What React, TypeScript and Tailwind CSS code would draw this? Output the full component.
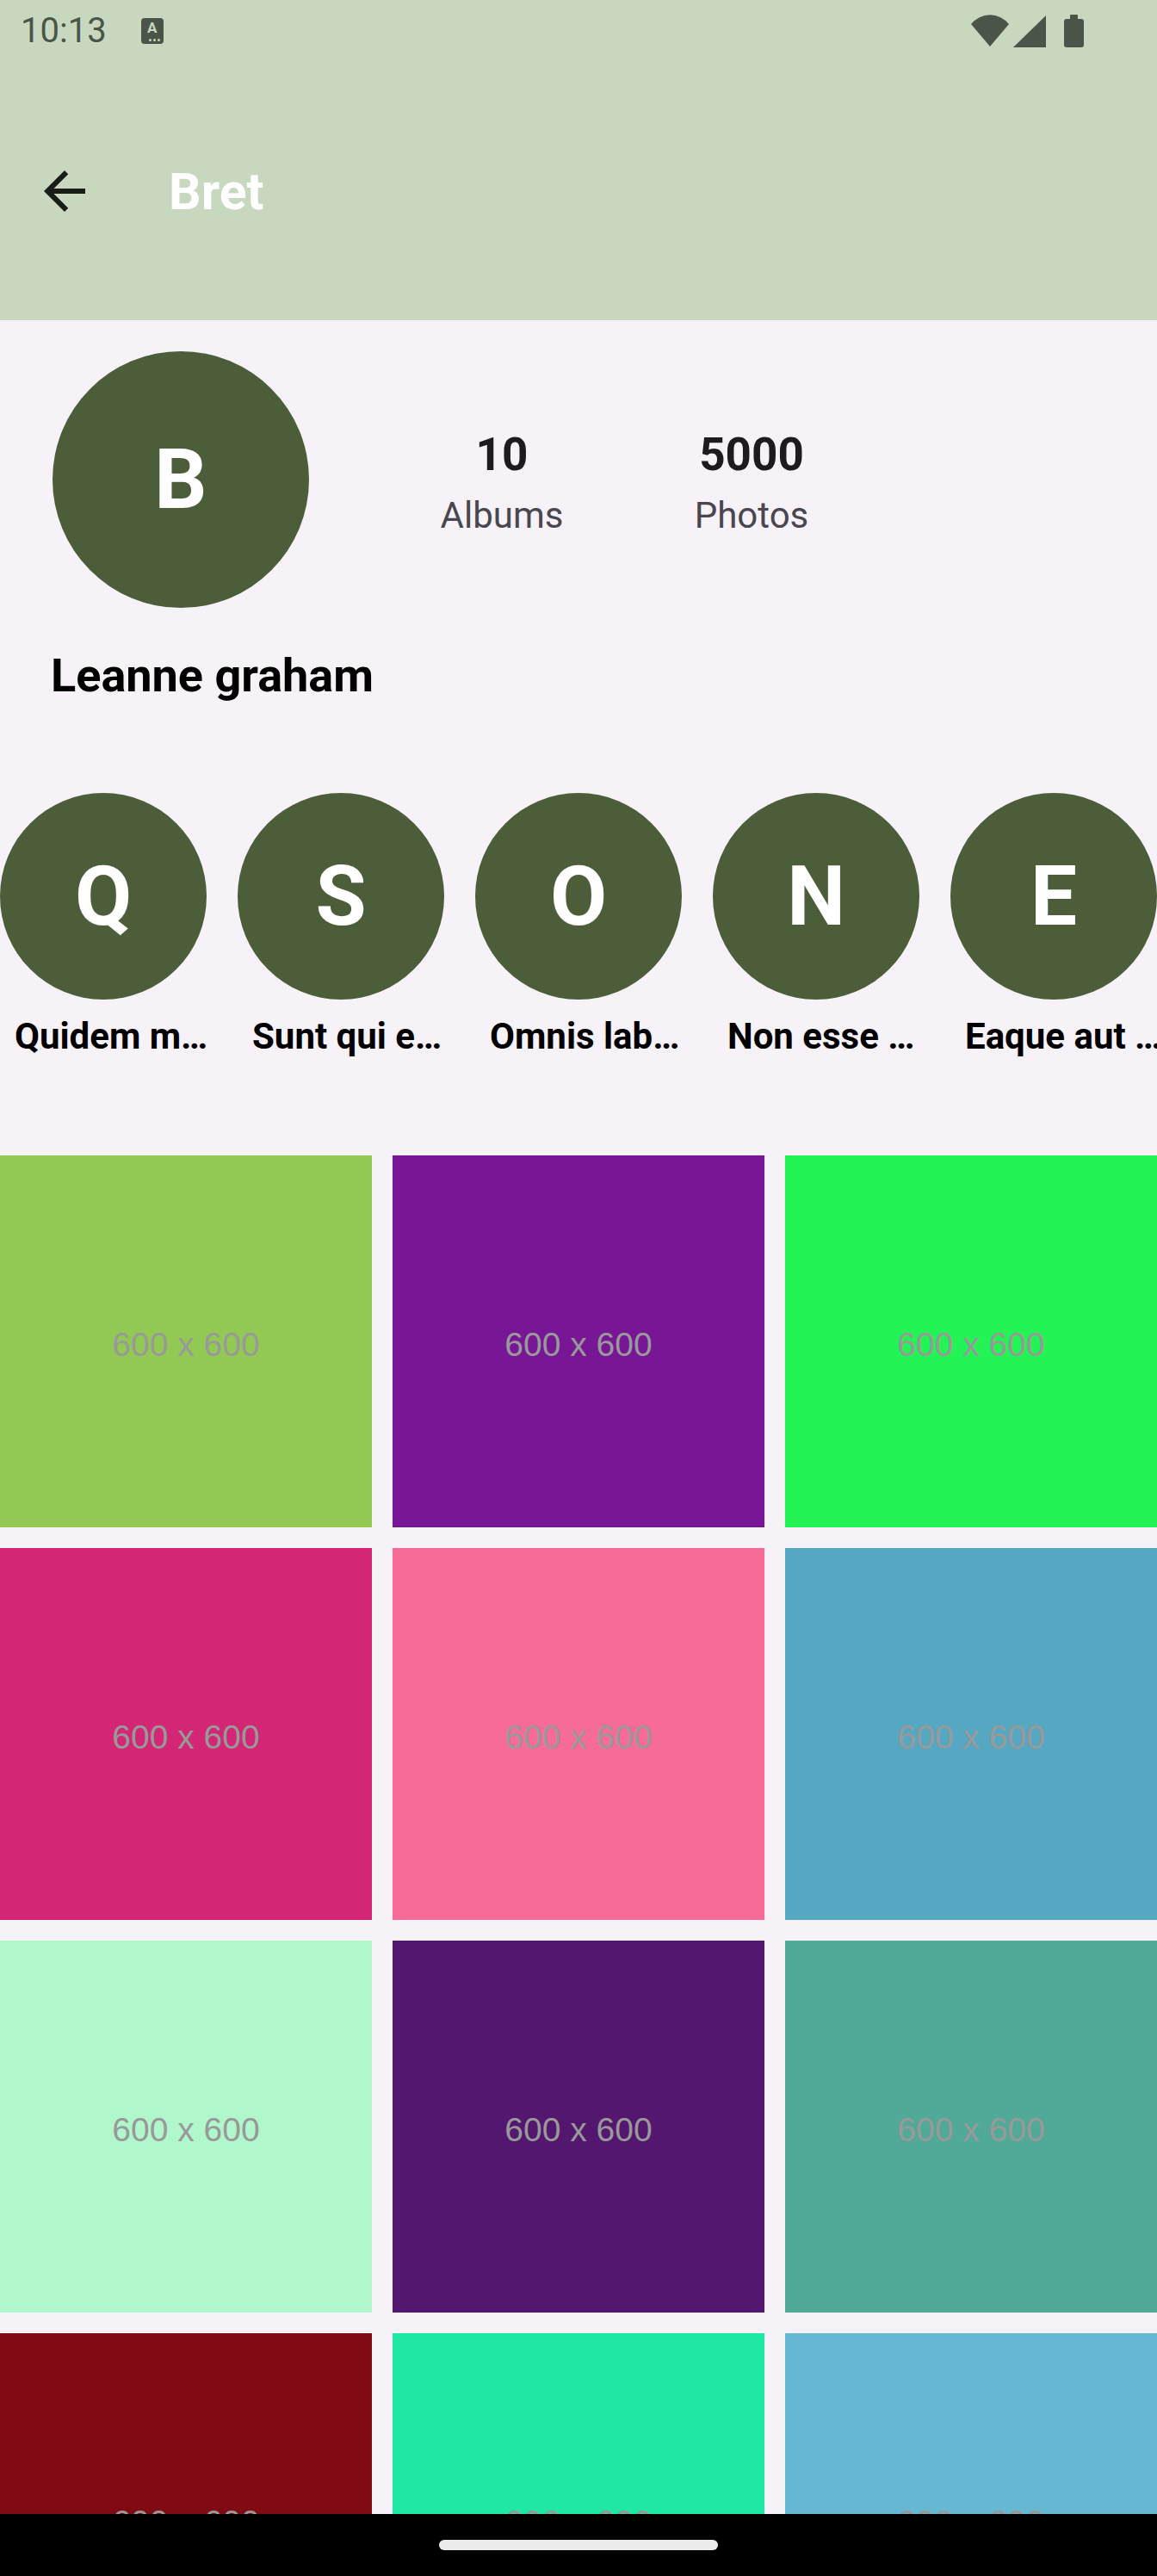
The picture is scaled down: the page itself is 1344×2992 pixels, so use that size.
import React from "react";

type Album = {
  letter: string;
  title: string;
};

const albums: Album[] = [
  { letter: "Q", title: "Quidem m…" },
  { letter: "S", title: "Sunt qui e…" },
  { letter: "O", title: "Omnis lab…" },
  { letter: "N", title: "Non esse …" },
  { letter: "E", title: "Eaque aut …" },
];

// placeholder colours of the first album's photos
const photos: string[] = [
  "#92c952",
  "#771796",
  "#24f355",
  "#d32776",
  "#f66b97",
  "#56a8c2",
  "#b0f7cc",
  "#54176f",
  "#51aa97",
  "#810b14",
  "#1ee8a4",
  "#66b7d2",
];

const StatusBar = () => {
  return (
    <div className="flex h-[72px] items-center">
      <span className="ml-[24px] text-[40px] leading-none text-[#4b5449]">
        10:13
      </span>
      <div className="relative ml-[40px] flex h-[30px] w-[26px] items-start justify-center rounded-[4px] bg-[#4b5449]">
        <span className="mt-[3px] text-[17px] font-bold leading-none text-[#c7d8be]">
          A
        </span>
        <div className="absolute bottom-[3px] right-[4px] flex gap-[2px]">
          <span className="h-[3px] w-[3px] rounded-full bg-[#c7d8be]" />
          <span className="h-[3px] w-[3px] rounded-full bg-[#c7d8be]" />
          <span className="h-[3px] w-[3px] rounded-full bg-[#c7d8be]" />
        </div>
      </div>
      <svg
        className="ml-auto mr-[84px]"
        width="132"
        height="40"
        viewBox="0 0 132 40"
        fill="#4b5449"
      >
        <path d="M22 38 L0 12 A28 28 0 0 1 44 12 Z" />
        <path d="M49 39 L87 2 L87 39 Z" />
        <rect x="108" y="6" width="23" height="33" rx="3" />
        <rect x="115" y="1" width="9" height="6" rx="1" />
      </svg>
    </div>
  );
};

const Stat = ({ value, label }: { value: string; label: string }) => {
  return (
    <div className="flex w-[160px] flex-col items-center">
      <span className="text-[53px] font-bold leading-[62px] text-[#1d1b20]">
        {value}
      </span>
      <span className="mt-[15px] text-[42px] leading-[50px] text-[#4a4650]">
        {label}
      </span>
    </div>
  );
};

const App = () => {
  return (
    <div className="flex h-[2992px] w-[1344px] flex-col overflow-hidden bg-[#f7f2f7] font-['Roboto',sans-serif]">
      <header className="shrink-0 bg-[#c7d8be]">
        <StatusBar />
        <div className="flex h-[300px] items-center">
          <svg
            className="ml-[39px]"
            width="72"
            height="72"
            viewBox="0 0 24 24"
            fill="#1a1c18"
          >
            <path d="M20 11H7.83l5.59-5.59L12 4l-8 8 8 8 1.41-1.41L7.83 13H20v-2z" />
          </svg>
          <h1 className="ml-[85px] text-[59px] font-bold leading-none text-white">
            Bret
          </h1>
        </div>
      </header>

      <main className="min-h-0 flex-1 overflow-hidden">
        <div className="flex items-start pl-[61px] pt-[36px]">
          <div className="flex h-[298px] w-[298px] shrink-0 items-center justify-center rounded-full bg-[#4b5e39]">
            <span className="text-[96px] font-bold leading-none text-white">
              B
            </span>
          </div>
          <div className="ml-[144px] mt-[89px] flex gap-[130px]">
            <Stat value="10" label="Albums" />
            <Stat value="5000" label="Photos" />
          </div>
        </div>

        <h2 className="mt-[48px] pl-[59px] text-[54px] font-bold leading-[62px] text-black">
          Leanne graham
        </h2>

        <div className="mt-[105px] flex gap-[36px] overflow-hidden">
          {albums.map((album) => (
            <div key={album.letter} className="flex w-[240px] shrink-0 flex-col">
              <div className="flex h-[240px] w-[240px] items-center justify-center rounded-full bg-[#4b5e39]">
                <span className="text-[96px] font-bold leading-none text-white">
                  {album.letter}
                </span>
              </div>
              <span className="mt-[18px] whitespace-nowrap pl-[17px] text-[42px] font-bold leading-[50px] text-black">
                {album.title}
              </span>
            </div>
          ))}
        </div>

        <div className="mt-[113px] grid grid-cols-3 gap-[24px]">
          {photos.map((color, i) => (
            <div
              key={i}
              className="flex aspect-square items-center justify-center pt-[7px]"
              style={{ backgroundColor: color }}
            >
              <span className="font-['Liberation_Sans',Arial,sans-serif] text-[39px] leading-none text-[#999999]">
                600 x 600
              </span>
            </div>
          ))}
        </div>
      </main>

      <nav className="flex h-[72px] shrink-0 items-center justify-center bg-black">
        <div className="h-[12px] w-[324px] rounded-full bg-[#ececec]" />
      </nav>
    </div>
  );
};

export default App;
